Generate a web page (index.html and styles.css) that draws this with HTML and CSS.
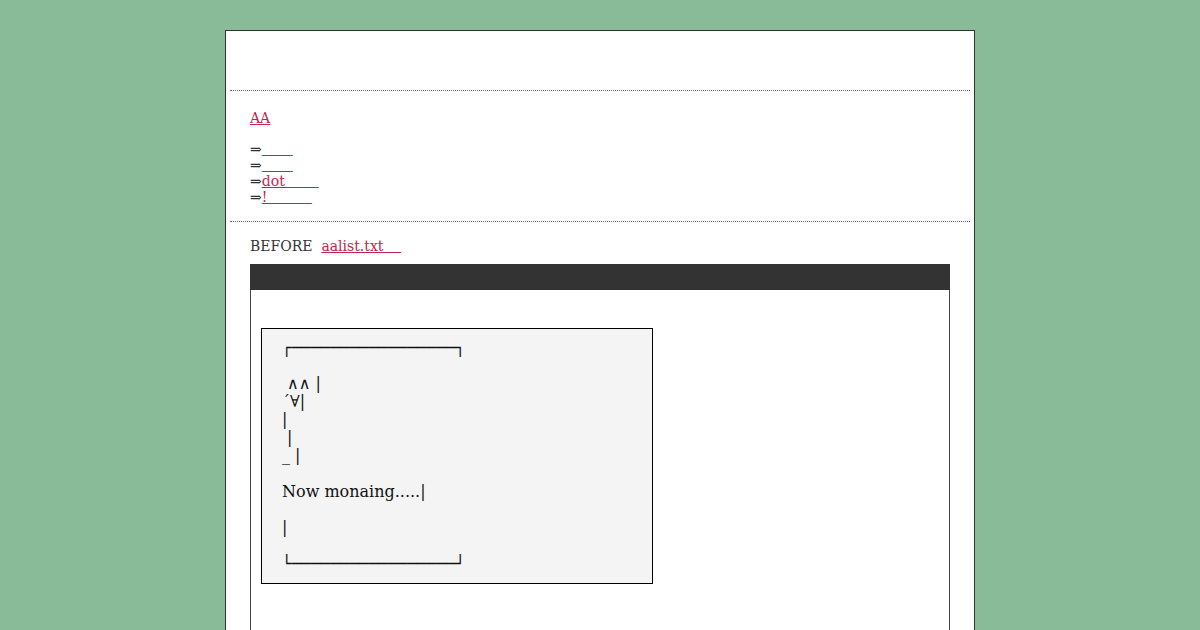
FILE: index.html
```html
<!DOCTYPE html>
<html>
<head>
<meta charset="utf-8">
<link rel="stylesheet" href="styles.css">
</head>
<body>
<div class="page">
  <div class="header"></div>
  <div class="nav">
    <div class="nav-title"><a href="#">AA</a></div>
    <ul class="nav-list">
      <li>⇒<a href="#">&nbsp;&nbsp;&nbsp;&nbsp;&nbsp;&nbsp;&nbsp;</a></li>
      <li>⇒<a href="#">&nbsp;&nbsp;&nbsp;&nbsp;&nbsp;&nbsp;&nbsp;</a></li>
      <li>⇒<a href="#">dot&nbsp;&nbsp;&nbsp;&nbsp;&nbsp;&nbsp;&nbsp;&thinsp;</a></li>
      <li>⇒<a href="#">!&nbsp;&nbsp;&nbsp;&nbsp;&nbsp;&nbsp;&nbsp;&nbsp;&nbsp;&nbsp;</a></li>
    </ul>
  </div>
  <div class="content">
    <div class="before">BEFORE&nbsp; <a href="#">aalist.txt&nbsp;&nbsp;&nbsp;&nbsp;</a></div>
    <div class="panel">
      <div class="panel-bar"></div>
      <div class="panel-body">
        <div class="aa">┌─────────────────┐

 ∧∧ |
´∀|
|
 |
_ |

Now monaing.....|

|

└─────────────────┘</div>
      </div>
    </div>
  </div>
</div>
</body>
</html>
```
FILE: styles.css
```css
html, body {
  margin: 0;
  padding: 0;
}
body {
  background: #8abb99;
  font-family: "DejaVu Serif", serif;
  color: #333;
}
a {
  color: #c2244f;
  text-decoration: underline;
}
.page {
  width: 740px;
  margin: 30px auto 0;
  padding: 0 4px;
  background: #fff;
  border: 1px solid #333;
  border-bottom: none;
  min-height: 620px;
}
.header {
  height: 59px;
  border-bottom: 1px dotted #666;
}
.nav {
  padding: 19px 20px 16px;
  font-size: 14px;
  line-height: 16px;
  border-bottom: 1px dotted #666;
}
.nav-title {
  margin-bottom: 15px;
}
.nav-list {
  list-style: none;
  margin: 0;
  padding: 0;
}
.content {
  padding: 15px 20px 0;
}
.before {
  font-size: 14px;
  line-height: 18px;
  margin-bottom: 9px;
}
.panel {
  border: 1px solid #444;
  border-top: none;
}
.panel-bar {
  height: 26px;
  background: #333;
  margin: 0 -1px;
}
.panel-body {
  padding: 38px 10px 80px;
}
.aa {
  box-sizing: border-box;
  width: 392px;
  background: #f4f4f4;
  border: 1px solid #000;
  padding: 10px 20px;
  font-family: "DejaVu Serif", serif;
  font-size: 16px;
  line-height: 18px;
  color: #111;
  white-space: pre;
}
```
